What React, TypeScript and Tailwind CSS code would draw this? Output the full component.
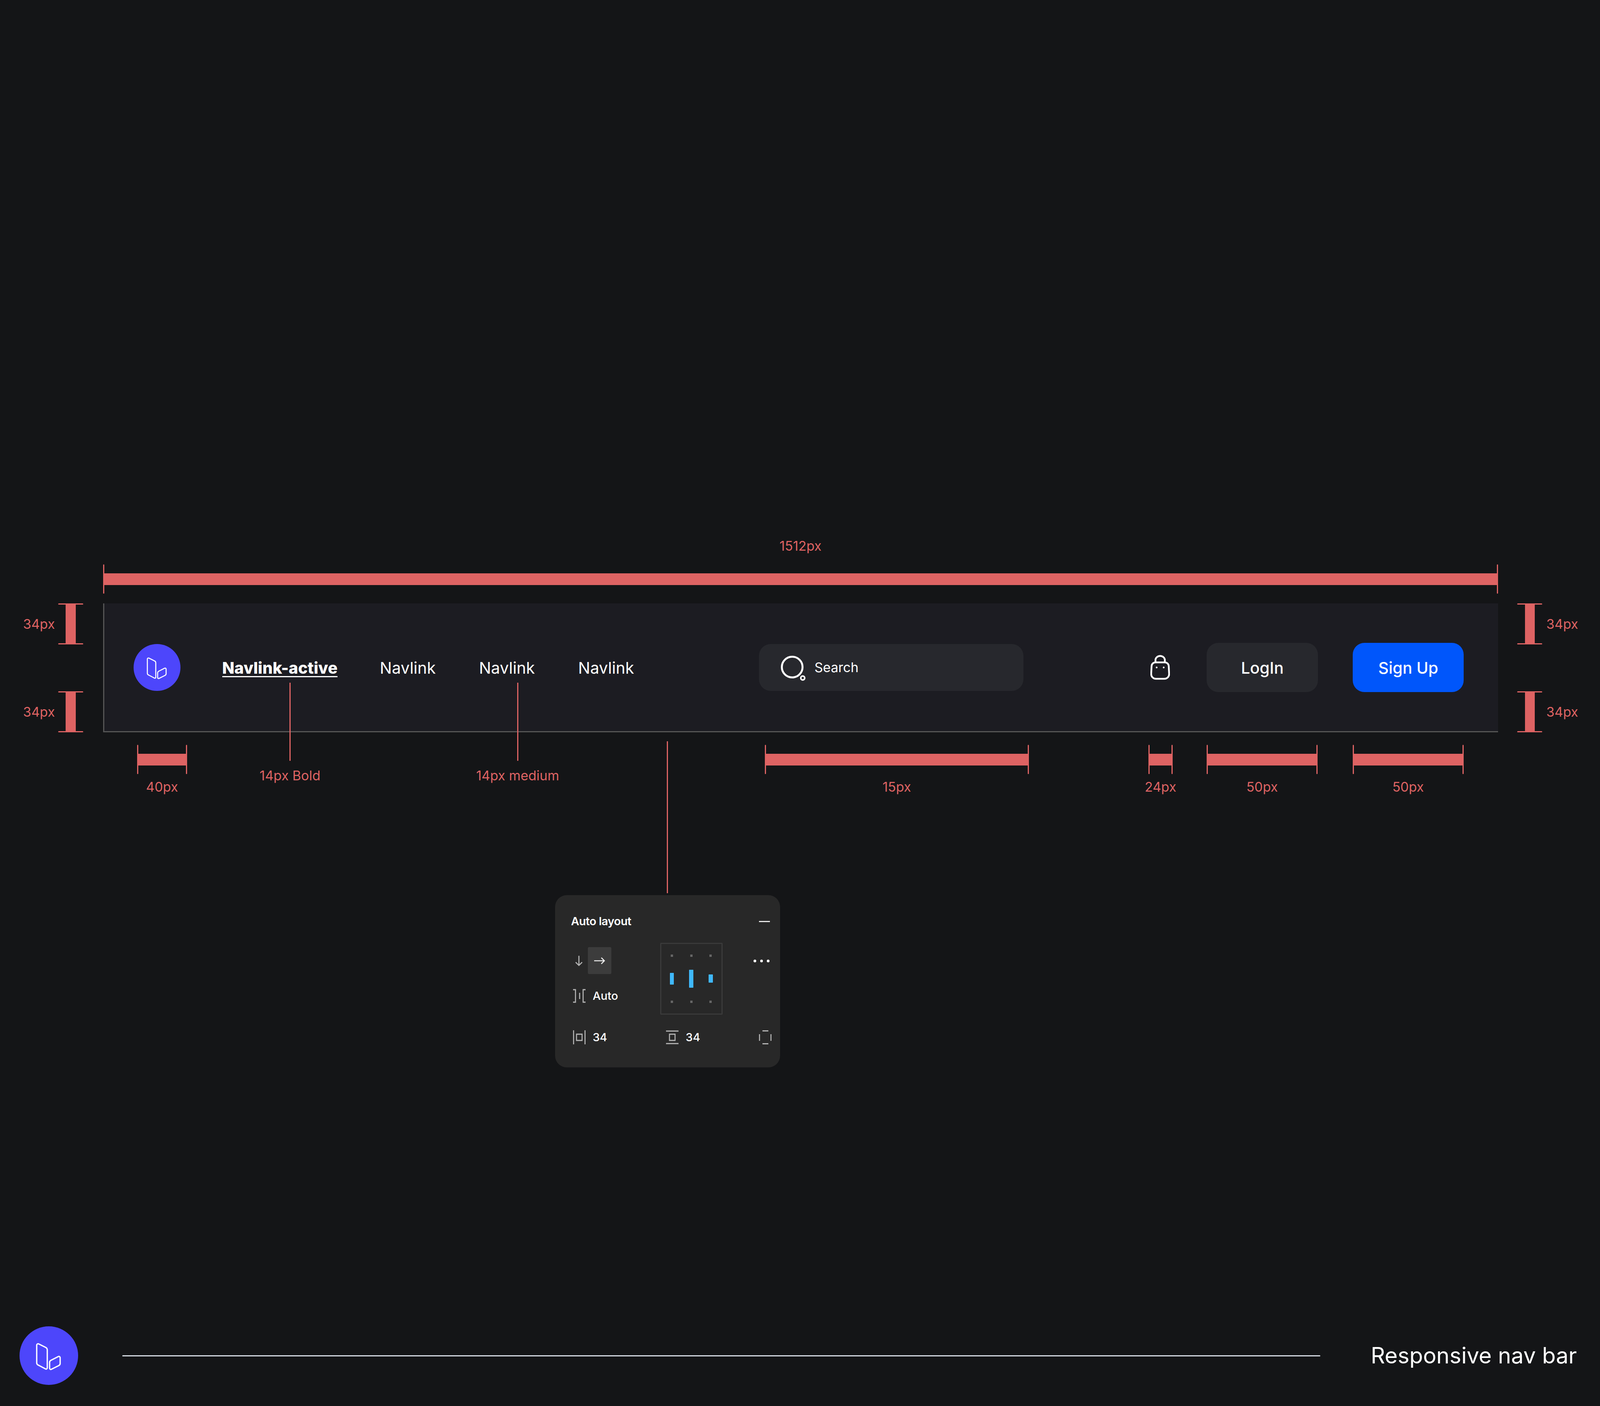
// Horizontal sizes are in vw (reference px / 48) because the window may be narrower than 4800.
function HMeasure() {
  return (
    <div className="flex h-[75px] w-full items-center">
      <span className="h-full w-[3px] shrink-0 rounded-full bg-[#de6363]" />
      <span className="h-[30px] flex-1 bg-[#de6363]" />
      <span className="h-full w-[3px] shrink-0 rounded-full bg-[#de6363]" />
    </div>
  );
}

function VMeasure() {
  return (
    <div className="flex h-[105px] w-[1.5625vw] flex-col items-center">
      <span className="h-[3px] w-full rounded-full bg-[#de6363]" />
      <span className="w-[0.625vw] flex-1 bg-[#de6363]" />
      <span className="h-[3px] w-full rounded-full bg-[#de6363]" />
    </div>
  );
}

function Label({ children }: { children: string }) {
  return <span className="whitespace-nowrap text-[34px] leading-[40px] text-[#de6363]">{children}</span>;
}

function Logo({ size }: { size: number }) {
  return (
    <div className="flex shrink-0 items-center justify-center rounded-full bg-[#4d46fb]" style={{ width: size, height: size }}>
      <svg viewBox="0 0 150 150" width={size} height={size} fill="none" stroke="#fff" strokeWidth="3.3" strokeLinejoin="round">
        <path d="M44 48a3.5 3.5 0 0 1 5-3l18 9a7 7 0 0 1 4 6v46a3 3 0 0 1-4.5 3l-19-10a6 6 0 0 1-3.5-5z" />
        <path d="M77 92a6 6 0 0 1 3.5-5l18.5-9.5a3.3 3.3 0 0 1 5 3v15a6 6 0 0 1-3.5 5l-19 9.5a3 3 0 0 1-4.5-3z" />
      </svg>
    </div>
  );
}

function LeftMarkers() {
  return (
    <div className="flex w-[6.4375vw] shrink-0 flex-col justify-between pl-[1.4375vw]">
      {[0, 1].map((i) => (
        <div key={i} className="flex items-center">
          <div className="w-[1.9375vw]"><Label>34px</Label></div>
          <div className="ml-[0.27vw]"><VMeasure /></div>
        </div>
      ))}
    </div>
  );
}

function RightMarkers() {
  return (
    <div className="ml-[1.2083vw] flex flex-col justify-between">
      {[0, 1].map((i) => (
        <div key={i} className="flex items-center">
          <VMeasure />
          <div className="ml-[0.25vw]"><Label>34px</Label></div>
        </div>
      ))}
    </div>
  );
}

function NavBar() {
  return (
    <div className="flex h-[330px] w-[87.1875vw] shrink-0 items-center border-b-[3px] border-l-[3px] border-[#555555] bg-[#1c1c22] pl-[2.0625vw]">
      <div className="flex w-[2.5vw] shrink-0 justify-center">
        <Logo size={120} />
      </div>
      <nav className="ml-[2.8125vw] mt-[4px] flex items-center text-[41px] text-white">
        <div className="w-[9.8542vw]">
          <a className="inline-block whitespace-nowrap border-b-[3px] border-white font-extrabold leading-[42px]">Navlink-active</a>
        </div>
        <a className="w-[6.1979vw]">Navlink</a>
        <a className="w-[6.1979vw]">Navlink</a>
        <a className="w-[11.3125vw]">Navlink</a>
      </nav>
      <div className="flex h-[120px] w-[16.51vw] shrink-0 items-center rounded-[30px] bg-[#27282d] pl-[1.354vw]">
        <div className="w-[2.104vw]">
          <svg viewBox="0 0 64 64" width="64" height="64" fill="none" stroke="#fff" className="mt-[4px]">
            <circle cx="29" cy="29" r="26.5" strokeWidth="5" />
            <circle cx="56" cy="57" r="5" strokeWidth="4" />
          </svg>
        </div>
        <span className="text-[34px] text-white">Search</span>
      </div>
      <div className="ml-[7.948vw] flex w-[1.208vw] shrink-0 justify-center">
        <svg viewBox="0 0 50 64" width="50" height="64" fill="none" stroke="#fff" strokeWidth="4.5" className="shrink-0">
          <path d="M13 19v-6a12 10.5 0 0 1 24 0v6" />
          <path d="M3 29a10 10 0 0 1 10-10h24a10 10 0 0 1 10 10l1 20a12 12 0 0 1-12 12H14a12 12 0 0 1-12-12z" />
          <circle cx="16" cy="32" r="1.5" fill="#fff" strokeWidth="1.5" />
          <circle cx="34" cy="32" r="1.5" fill="#fff" strokeWidth="1.5" />
        </svg>
      </div>
      <button className="ml-[2.3125vw] h-[126px] w-[6.9375vw] shrink-0 rounded-[30px] bg-[#27282d] pt-[4px] text-[41px] font-medium text-white">LogIn</button>
      <button className="ml-[2.1875vw] h-[126px] w-[6.9375vw] shrink-0 rounded-[30px] bg-[#0056fb] pt-[4px] text-[41px] font-medium text-white">Sign Up</button>
    </div>
  );
}

function Callout({ label, className }: { label: string; className: string }) {
  return (
    <div className={`relative z-10 -mt-[159px] flex w-[5.8333vw] shrink-0 flex-col items-center ${className}`}>
      <span className="h-[200px] w-[3px] bg-[#de6363]" />
      <span className="mt-[18px]"><Label>{label}</Label></span>
    </div>
  );
}

function MeasureItem({ label, className }: { label: string; className: string }) {
  return (
    <div className={`flex shrink-0 flex-col items-center ${className}`}>
      <HMeasure />
      <span className="mt-[13px]"><Label>{label}</Label></span>
    </div>
  );
}

function PanelIcon({ d }: { d: string }) {
  return (
    <svg viewBox="0 0 36 36" width="32" height="36" preserveAspectRatio="none" fill="none" stroke="#b4b4b4" strokeWidth="3" className="shrink-0">
      <path d={d} />
    </svg>
  );
}

function AutoLayoutPanel() {
  return (
    <div className="flex h-[441px] w-[14.0625vw] flex-col rounded-[30px] bg-[#282828] pl-[1vw] pr-[0.5417vw] text-white">
      <div className="mt-[49px] flex h-[36px] items-center justify-between pr-[0.1vw]">
        <span className="text-[29px] font-semibold tracking-[-0.5px]">Auto layout</span>
        <span className="h-[3px] w-[28px] bg-[#e8e8e8]" />
      </div>
      <div className="mt-[37px] flex h-[184px]">
        <div className="flex w-[5.604vw] shrink-0 flex-col">
          <div className="mt-[11px] flex h-[69px] items-center">
            <svg viewBox="0 0 24 30" width="22" height="30" fill="none" stroke="#b4b4b4" strokeWidth="3" className="ml-[9px]">
              <path d="M12 1v27M3 19l9 9 9-9" />
            </svg>
            <div className="ml-[12px] flex h-[69px] w-[60px] items-center justify-center rounded-[3px] bg-[#3c3c3c]">
              <svg viewBox="0 0 32 24" width="28" height="24" fill="none" stroke="#eeeeee" strokeWidth="3">
                <path d="M0 12h30M21 3l9 9-9 9" />
              </svg>
            </div>
          </div>
          <div className="mt-[38px] flex h-[36px] items-center pl-[5px]">
            <PanelIcon d="M0 2h7v32H0M19 10v16M36 2h-7v32h7" />
            <span className="ml-[0.45vw] text-[29px] font-medium">Auto</span>
          </div>
        </div>
        <div className="flex w-[3.833vw] shrink-0 justify-center">
          <div className="grid h-[184px] w-[160px] shrink-0 grid-cols-3 grid-rows-3 place-items-center rounded-[2px] border-[3px] border-[#3a3a3a] px-[3px]">
            <span className="size-[6px] bg-[#666666]" />
            <span className="size-[6px] bg-[#666666]" />
            <span className="size-[6px] bg-[#666666]" />
            <span className="h-[30px] w-[10px] rounded-[1px] bg-[#3fb8fb]" />
            <span className="h-[46px] w-[11px] rounded-[1px] bg-[#3fb8fb]" />
            <span className="h-[21px] w-[11px] rounded-[1px] bg-[#3fb8fb]" />
            <span className="size-[6px] bg-[#666666]" />
            <span className="size-[6px] bg-[#666666]" />
            <span className="size-[6px] bg-[#666666]" />
          </div>
        </div>
        <div className="ml-[1.98vw] mt-[43px] flex h-[7px] items-center gap-[10px]">
          <span className="size-[7px] rounded-full bg-white" />
          <span className="size-[7px] rounded-full bg-white" />
          <span className="size-[7px] rounded-full bg-white" />
        </div>
      </div>
      <div className="mt-[40px] flex h-[36px] items-center">
        <div className="flex w-[5.9375vw] shrink-0 items-center pl-[5px]">
          <PanelIcon d="M1.5 0v36M34.5 0v36M10 10h16v16H10z" />
          <span className="ml-[0.45vw] text-[29px] font-medium">34</span>
        </div>
        <div className="flex w-[5.8125vw] shrink-0 items-center">
          <PanelIcon d="M0 2h36M0 34h36M10 10h16v16H10z" />
          <span className="ml-[0.45vw] text-[29px] font-medium">34</span>
        </div>
        <PanelIcon d="M10 1.5h17M10 34.5h17M1.5 10v17M34.5 10v17" />
      </div>
    </div>
  );
}

export default function App() {
  return (
    <div className="flex h-[3600px] w-[100vw] flex-col overflow-hidden bg-[#141517] font-['Inter','Liberation_Sans',sans-serif]">
      <div className="ml-[6.4375vw] mt-[1378px] flex w-[87.1875vw] flex-col items-center">
        <Label>1512px</Label>
        <div className="mt-[27px] w-full">
          <HMeasure />
        </div>
      </div>

      <div className="mt-[25px] flex">
        <LeftMarkers />
        <NavBar />
        <RightMarkers />
      </div>

      <div className="mt-[32px] flex h-[133px] items-start">
        <MeasureItem label="40px" className="ml-[8.5625vw] w-[3.125vw]" />
        <Callout label="14px Bold" className="ml-[3.5208vw]" />
        <Callout label="14px medium" className="ml-[8.3958vw]" />
        <MeasureItem label="15px" className="ml-[12.5208vw] w-[16.5208vw]" />
        <MeasureItem label="24px" className="ml-[7.4583vw] w-[1.5208vw]" />
        <MeasureItem label="50px" className="ml-[2.125vw] w-[6.9375vw]" />
        <MeasureItem label="50px" className="ml-[2.1875vw] w-[6.9375vw]" />
      </div>

      <div className="ml-[34.6875vw] flex w-[14.0625vw] flex-col items-center">
        <span className="-mt-[142px] h-[389px] w-[3px] bg-[#de6363]" />
        <div className="mt-[5px]">
          <AutoLayoutPanel />
        </div>
      </div>

      <footer className="mt-auto flex items-center pb-[54px] pl-[1.5vw]">
        <div className="flex w-[3.125vw] shrink-0 justify-center">
          <Logo size={150} />
        </div>
        <span className="ml-[3.0208vw] h-[3px] w-[74.875vw] shrink-0 rounded-full bg-[#d6dbe3]" />
        <span className="ml-[3.1458vw] whitespace-nowrap text-[57px] text-white">Responsive nav bar</span>
      </footer>
    </div>
  );
}
